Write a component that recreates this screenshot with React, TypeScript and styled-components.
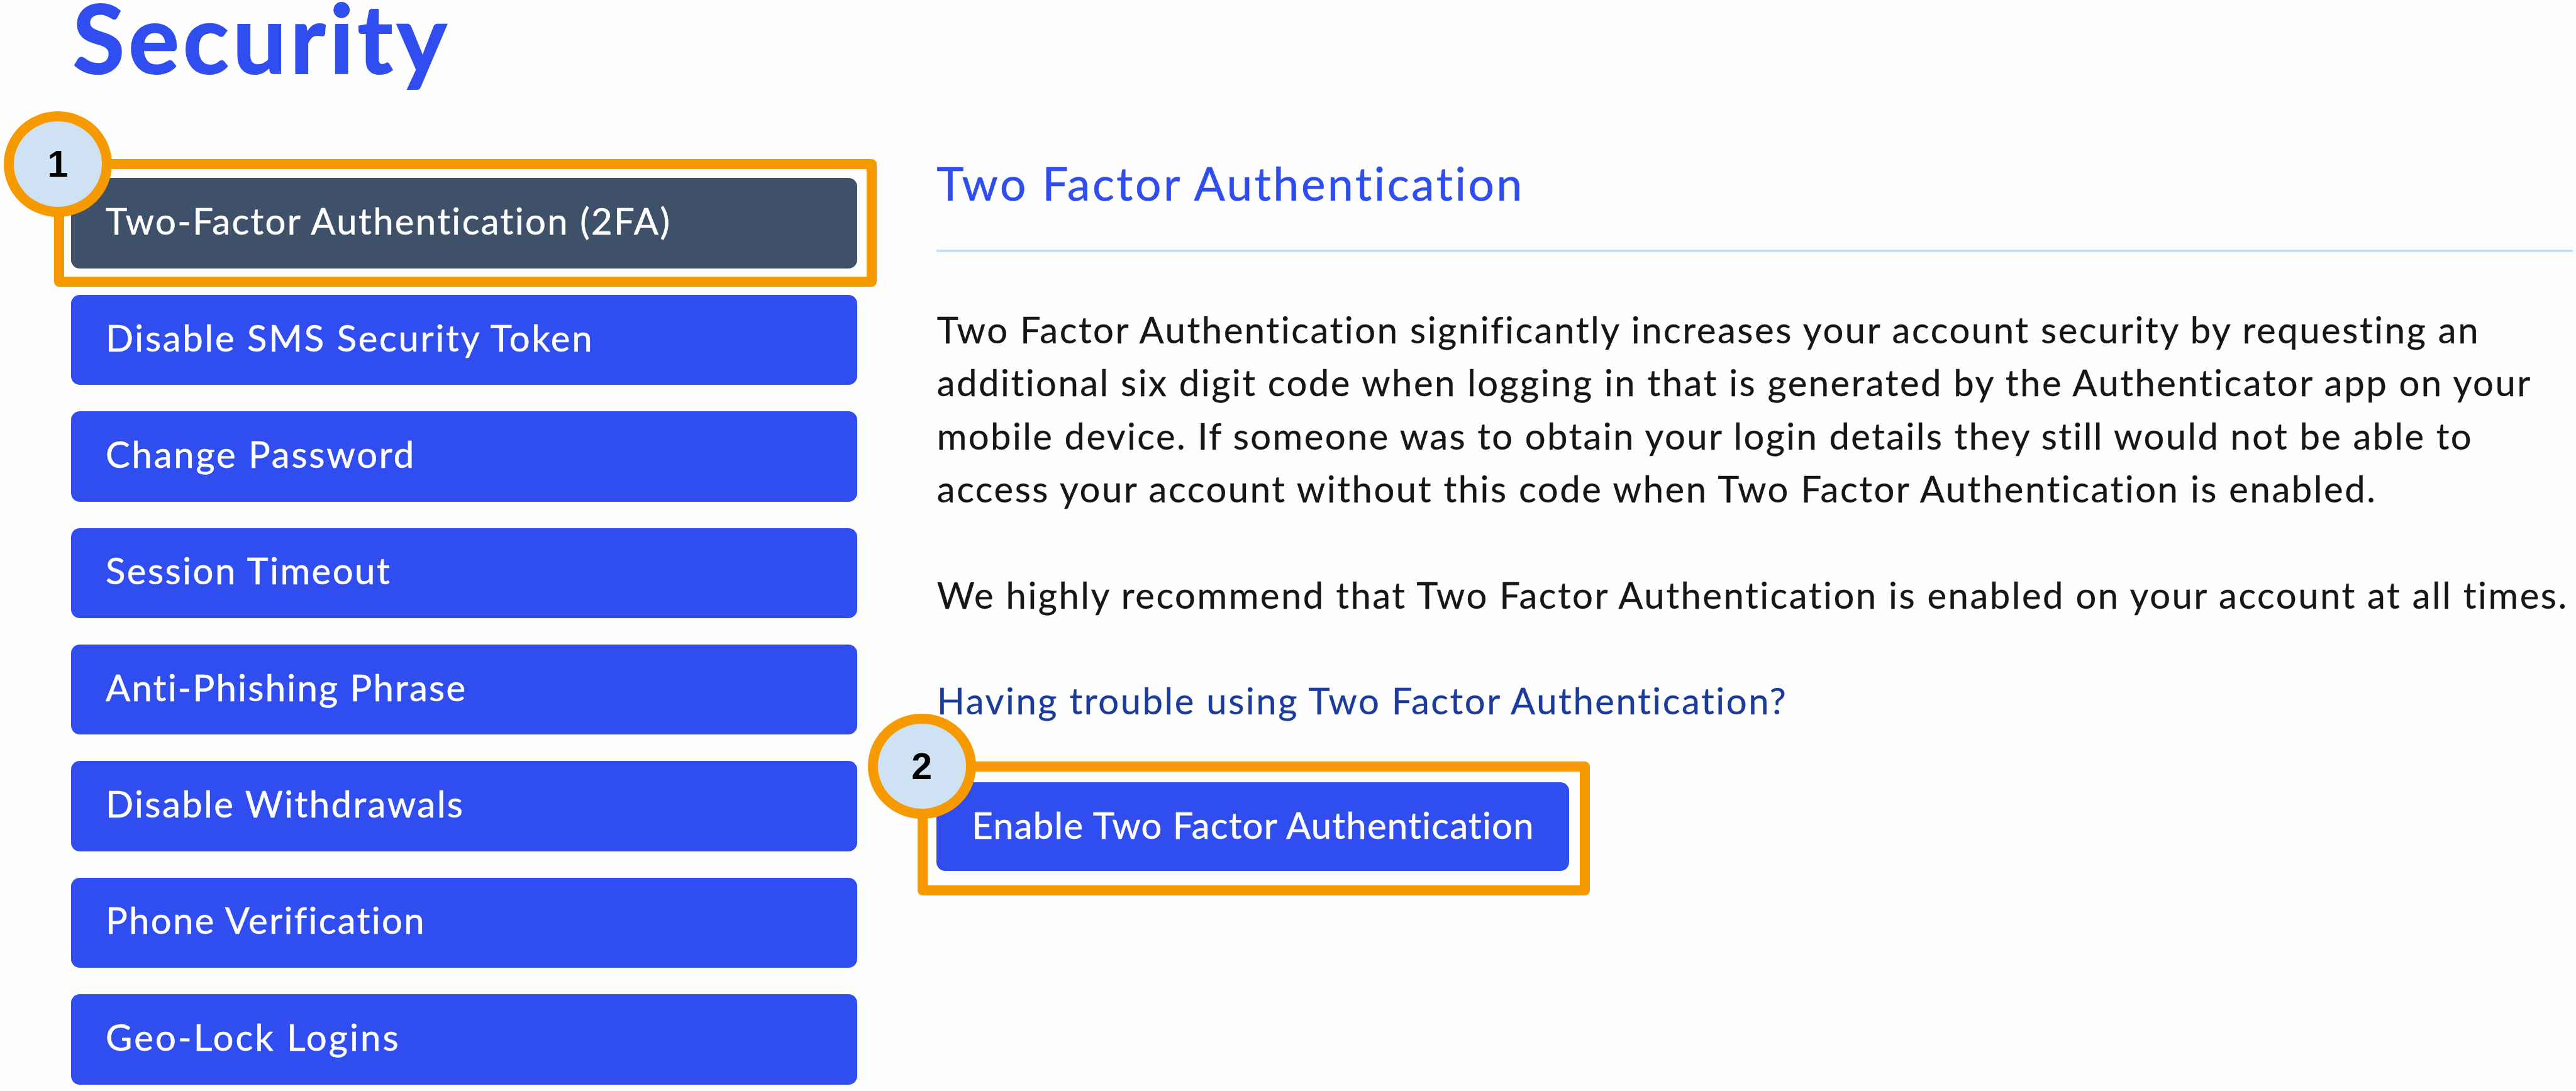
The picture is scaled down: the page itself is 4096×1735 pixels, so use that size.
import React from 'react'
import styled, { createGlobalStyle } from 'styled-components'

const GlobalStyle = createGlobalStyle`
  * {
    box-sizing: border-box;
  }
  body {
    margin: 0;
    background-color: #fefefe;
    font-family: Lato, 'Open Sans', sans-serif;
    font-size: 58px;
    color: #161616;
    -webkit-text-stroke: .3px;
    overflow: hidden;
  }
`

const Page = styled.div`
  height: 1735px;
  padding-left: 113.4px;
  overflow: hidden;
`

const Title = styled.h1`
  margin: 0 0 0 2px;
  font-size: 151px;
  line-height: 118px;
  font-weight: 700;
  letter-spacing: 6.2px;
  color: #304ef0;
  -webkit-text-stroke: 2px;
`

const Columns = styled.div`
  display: flex;
  align-items: flex-start;
  gap: 126.3px;
`

const Menu = styled.nav`
  display: flex;
  flex-direction: column;
  gap: 41.9px;
  width: 1249.6px;
  padding-top: 165.4px;
`

const Anchor = styled.div`
  position: relative;
  display: flex;
`

const MenuItem = styled.button<{ $active?: boolean, $tracking?: number }>`
  width: 100%;
  height: 143.5px;
  padding: 0 53.6px 9px 54.6px;
  border: none;
  border-radius: 14px;
  background-color: ${p => p.$active ? '#3f5168' : '#304ef0'};
  color: #fefefe;
  font: inherit;
  text-align: left;
  letter-spacing: ${p => p.$tracking ?? 2.5}px;
  white-space: nowrap;
  -webkit-text-stroke: .5px;
`

const Panel = styled.section`
  width: 2601.8px;
  padding-top: 127.5px;
`

const PanelTitle = styled.h2`
  margin: 0;
  padding-bottom: 61.8px;
  border-bottom: 4.5px solid #c3e1ff;
  font-size: 73px;
  line-height: 90px;
  font-weight: 400;
  letter-spacing: 3.6px;
  color: #304ef0;
  -webkit-text-stroke: .6px;
`

const Copy = styled.div`
  display: flex;
  flex-direction: column;
  gap: 84.3px;
  padding: 80.8px 0 0 .5px;
  line-height: 84.3px;
`

const Paragraph = styled.p`
  margin: 0;
`

const Line = styled.span<{ $tracking: number }>`
  display: block;
  letter-spacing: ${p => p.$tracking}px;
  white-space: nowrap;
`

const HelpLink = styled.a`
  letter-spacing: 2.54px;
  color: #1b3c9d;
`

const Action = styled(Anchor)`
  width: 1005.3px;
  margin-top: 87.4px;
`

const ActionButton = styled(MenuItem)`
  height: 141.1px;
  padding: 0 0 5px 56px;
  letter-spacing: 1.24px;
`

// orange outline drawn around a step target, $inset is top right bottom left
const Frame = styled.div<{ $inset: string }>`
  position: absolute;
  inset: ${p => p.$inset};
  border: 16px solid #f79a00;
  border-radius: 8px;
`

const Badge = styled.div`
  position: absolute;
  top: -92.3px;
  left: -95.8px;
  width: 172px;
  height: 167.6px;
  display: flex;
  align-items: center;
  justify-content: center;
  border: 16px solid #f79a00;
  border-radius: 50%;
  background-color: #cfe2f3;
  color: #000000;
  font-family: 'Liberation Sans', Arial, sans-serif;
  font-weight: 700;
  font-size: 59px;
  -webkit-text-stroke: 0;
`

const menu = [
  { label: 'Two-Factor Authentication (2FA)', tracking: 2.37 },
  { label: 'Disable SMS Security Token', tracking: 2.75 },
  { label: 'Change Password', tracking: 2.8 },
  { label: 'Session Timeout' },
  { label: 'Anti-Phishing Phrase', tracking: 2.25 },
  { label: 'Disable Withdrawals', tracking: 2.45 },
  { label: 'Phone Verification', tracking: 2.35 },
  { label: 'Geo-Lock Logins', tracking: 3.15 },
]

const intro = [
  { text: 'Two Factor Authentication significantly increases your account security by requesting an', tracking: 2.55 },
  { text: 'additional six digit code when logging in that is generated by the Authenticator app on your', tracking: 2.48 },
  { text: 'mobile device. If someone was to obtain your login details they still would not be able to', tracking: 2.375 },
  { text: 'access your account without this code when Two Factor Authentication is enabled.', tracking: 2.53 },
]

function Callout ({ step, inset }: { step: number, inset: string }) {
  return (
    <Frame $inset={inset}>
      <Badge>{step}</Badge>
    </Frame>
  )
}

export default function App () {
  return (
    <Page>
      <GlobalStyle />
      <Title>Security</Title>
      <Columns>
        <Menu>
          {menu.map((item, i) => (
            <Anchor key={item.label}>
              <MenuItem $active={i === 0} $tracking={item.tracking}>{item.label}</MenuItem>
              {i === 0 && <Callout step={1} inset="-30.2px -31.2px -29.1px -27.7px" />}
            </Anchor>
          ))}
        </Menu>
        <Panel>
          <PanelTitle>Two Factor Authentication</PanelTitle>
          <Copy>
            <Paragraph>
              {intro.map(line => <Line key={line.text} $tracking={line.tracking}>{line.text}</Line>)}
            </Paragraph>
            <Paragraph>
              <Line $tracking={2.5}>We highly recommend that Two Factor Authentication is enabled on your account at all times.</Line>
            </Paragraph>
            <HelpLink>Having trouble using Two Factor Authentication?</HelpLink>
          </Copy>
          <Action>
            <ActionButton>Enable Two Factor Authentication</ActionButton>
            <Callout step={2} inset="-32.8px -33.6px -39.5px -29.8px" />
          </Action>
        </Panel>
      </Columns>
    </Page>
  )
}
